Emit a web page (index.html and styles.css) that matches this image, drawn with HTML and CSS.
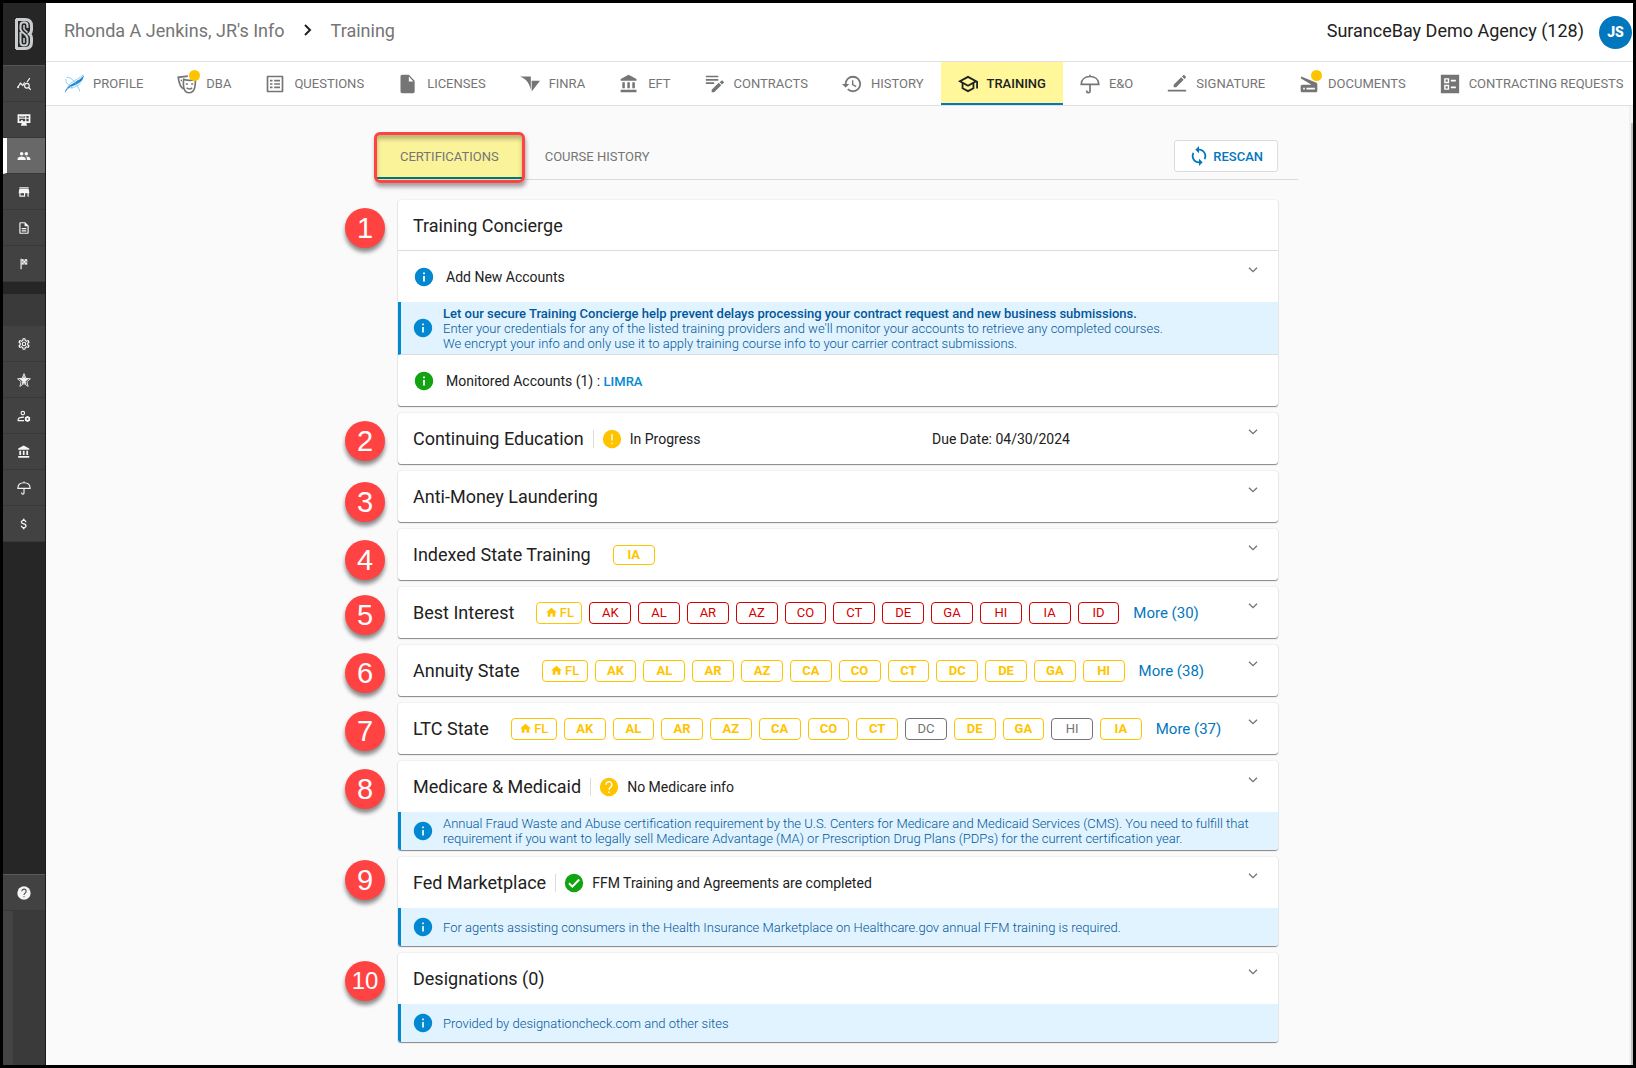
FILE: index.html
```html
<!DOCTYPE html>
<html lang="en">
<head>
  <meta charset="UTF-8" />
  <meta name="viewport" content="width=device-width, initial-scale=1.0" />
  <title>Training - SuranceBay</title>
  <link rel="stylesheet" href="styles.css">
</head>
<body>
  <!-- icon set -->
  <svg class="sprite" aria-hidden="true">
    <symbol id="i-bank" viewBox="0 0 24 24"><path d="M4 10v7h3v-7H4zm6 0v7h3v-7h-3zM2 22h19v-3H2v3zm14-12v7h3v-7h-3zm-4.500-9L2 6v2h19V6l-9.500-5z"/></symbol>
    <symbol id="i-umbrella" viewBox="0 0 24 24"><path d="M1.500 12.500C1.500 6.500 6 3 12 3s10.500 3.500 10.500 9.500z M12 1v2 M12 12.500v8a2 2 0 0 1-4 0v-.6" fill="none" stroke="currentColor" stroke-width="2"/></symbol>
    <symbol id="i-info" viewBox="0 0 24 24"><path d="M12 2C6.480 2 2 6.480 2 12s4.480 10 10 10 10-4.480 10-10S17.520 2 12 2zm1 15h-2v-6h2v6zm0-8h-2V7h2v2z"/></symbol>
    <symbol id="i-warn" viewBox="0 0 24 24"><circle cx="12" cy="12" r="10"/><path d="M12 6.500v7M12 16v1.500" stroke="#fff" stroke-width="1.500"/></symbol>
    <symbol id="i-help" viewBox="0 0 24 24"><circle cx="12" cy="12" r="10"/><path d="M8.800 9.500a3.200 3.200 0 1 1 5.200 2.400c-1.200.9-2 1.500-2 3.100M12 16.800v1.700" fill="none" stroke="var(--mark, #fff)" stroke-width="1.600"/></symbol>
    <symbol id="i-check" viewBox="0 0 24 24"><circle cx="12" cy="12" r="10"/><path d="M6.500 12.300l3.700 3.700 7.500-7.800" fill="none" stroke="#fff" stroke-width="2.200"/></symbol>
    <symbol id="i-down" viewBox="0 0 24 24"><path d="M6 8.500l6 6 6-6" fill="none" stroke="currentColor" stroke-width="2"/></symbol>
    <symbol id="i-home" viewBox="0 0 24 24"><path d="M10 20v-6h4v6h5v-8h3L12 3 2 12h3v8z"/></symbol>
  </svg>

  <aside class="sidebar">
    <a class="logo" href="#" aria-label="SuranceBay">
      <svg class="line" viewBox="0 0 20 34" width="20" height="34">
        <path d="M2.500 2v30M2 2.500h9c4.500 0 6.500 2.500 6.500 6.500v4c0 2-.7 3-2 4 1.300 1 2 2 2 4v4c0 4-2 6.500-6.500 6.500H2" stroke="#c9ccce" stroke-width="3"/>
        <path d="M13.500 11V8.500c0-2-1.500-3.200-3.500-3.200s-3.500 1.200-3.500 3.200V12c0 2 1.400 3 3.500 4.500s3.500 2.700 3.500 5V25c0 2.200-1.500 3.500-3.500 3.500S6.500 27 6.500 25V15" stroke="#c9ccce" stroke-width="2"/>
        <path d="M10 8v4l3.500 3.500M10 26v-5" stroke="#c9ccce" stroke-width="1.500"/>
      </svg>
    </a>
    <nav class="side-group" aria-label="Main">
      <a href="#" aria-label="Analytics"><svg viewBox="0 0 24 24"><path d="M1 18l5-7 4 3.500L13 9M17 9l5-7" fill="none" stroke="currentColor" stroke-width="2"/><circle cx="2" cy="17.500" r="1.600"/><circle cx="6" cy="11" r="1.600"/><circle cx="17" cy="15" r="4" fill="none" stroke="currentColor" stroke-width="2"/><path d="M20 18l3.500 4" stroke="currentColor" stroke-width="2"/></svg></a>
      <a href="#" aria-label="Dashboard"><svg viewBox="0 0 24 24"><path fill-rule="evenodd" d="M1 2h22v15h-7l1 4v1H7v-1l1-4H1zM4 5v3h10V5zm12 0v3h4V5zM4 10v4h3v-2h3v2h4v-4zm12 0v4h4v-4z"/><path d="M5 5.500h8v2H5z" opacity=".7"/></svg></a>
      <a class="current" href="#" aria-label="Producers"><svg viewBox="0 0 24 24"><path d="M16 11c1.660 0 2.990-1.340 2.990-3S17.660 5 16 5c-1.660 0-3 1.340-3 3s1.340 3 3 3zm-8 0c1.660 0 2.990-1.340 2.990-3S9.660 5 8 5C6.340 5 5 6.340 5 8s1.340 3 3 3zm0 2c-2.330 0-7 1.170-7 3.500V19h14v-2.500c0-2.330-4.670-3.500-7-3.500zm8 0c-.29 0-.62.02-.97.05 1.160.84 1.970 1.970 1.970 3.450V19h6v-2.500c0-2.330-4.670-3.500-7-3.500z"/></svg></a>
      <a href="#" aria-label="Store"><svg viewBox="0 0 24 24"><path d="M20 4H4v2h16V4zm1 10v-2l-1-5H4l-1 5v2h1v6h10v-6h4v6h2v-6h1zm-9 4H6v-4h6v4z"/></svg></a>
      <a href="#" aria-label="Documents"><svg viewBox="0 0 24 24"><path d="M8 16h8v2H8zm0-4h8v2H8zm6-10H6c-1.100 0-2 .9-2 2v16c0 1.100.89 2 1.990 2H18c1.100 0 2-.9 2-2V8l-6-6zm4 18H6V4h7v5h5v11z"/></svg></a>
      <a href="#" aria-label="Goals"><svg viewBox="0 0 24 24"><path d="M6 3h2v18H6z"/><path d="M8 4h3v3H8zM14 4h3v3h-3zM11 7h3v3h-3zM8 10h3v3H8zM14 10h3v3h-3z"/><path d="M8 4h10v9H8z" opacity=".5"/></svg></a>
    </nav>
    <div class="side-blank"></div>
    <nav class="side-group" aria-label="Agency">
      <a href="#" aria-label="Settings"><svg viewBox="0 0 24 24"><path d="M12,8A4,4 0 0,1 16,12A4,4 0 0,1 12,16A4,4 0 0,1 8,12A4,4 0 0,1 12,8M12,10A2,2 0 0,0 10,12A2,2 0 0,0 12,14A2,2 0 0,0 14,12A2,2 0 0,0 12,10M10,22C9.750,22 9.540,21.820 9.500,21.580L9.130,18.930C8.500,18.680 7.960,18.340 7.440,17.940L4.950,18.950C4.730,19.030 4.460,18.950 4.340,18.730L2.340,15.270C2.210,15.050 2.270,14.780 2.460,14.630L4.570,12.970L4.500,12L4.570,11L2.460,9.370C2.270,9.220 2.210,8.950 2.340,8.730L4.340,5.270C4.460,5.050 4.730,4.960 4.950,5.050L7.440,6.050C7.960,5.660 8.500,5.320 9.130,5.070L9.500,2.420C9.540,2.180 9.750,2 10,2H14C14.250,2 14.460,2.180 14.500,2.420L14.870,5.070C15.500,5.320 16.040,5.660 16.560,6.050L19.050,5.050C19.270,4.960 19.540,5.050 19.660,5.270L21.660,8.730C21.790,8.950 21.730,9.220 21.540,9.370L19.430,11L19.500,12L19.430,13L21.540,14.630C21.730,14.780 21.790,15.050 21.660,15.270L19.660,18.730C19.540,18.950 19.270,19.040 19.050,18.950L16.560,17.950C16.040,18.340 15.500,18.680 14.870,18.930L14.500,21.580C14.460,21.820 14.250,22 14,22H10M11.250,4L10.880,6.610C9.680,6.860 8.620,7.500 7.850,8.390L5.440,7.350L4.690,8.650L6.800,10.200C6.400,11.370 6.400,12.640 6.800,13.800L4.680,15.360L5.430,16.660L7.860,15.620C8.630,16.500 9.680,17.140 10.870,17.380L11.240,20H12.760L13.130,17.390C14.320,17.140 15.370,16.500 16.140,15.620L18.570,16.660L19.320,15.360L17.200,13.810C17.600,12.640 17.600,11.370 17.200,10.200L19.310,8.650L18.560,7.350L16.150,8.390C15.380,7.500 14.320,6.860 13.120,6.620L12.750,4H11.250Z"/></svg></a>
      <a href="#" aria-label="Carriers"><svg viewBox="0 0 24 24"><path d="M12 2l4 18-13-11h18L8 20z"/><path d="M12 1l3 8 8 1-6 5 2 8-7-5-7 5 2-8-6-5 8-1z" fill="none" stroke="currentColor" stroke-width="1.500"/></svg></a>
      <a href="#" aria-label="User settings"><svg viewBox="0 0 24 24"><circle cx="10" cy="7" r="3" fill="none" stroke="currentColor" stroke-width="2"/><path d="M12 14c-5 0-10 .5-10 4v2h10" fill="none" stroke="currentColor" stroke-width="2"/><circle cx="18" cy="17" r="3" fill="none" stroke="currentColor" stroke-width="3"/><path d="M18 12v2M18 20v2M13.700 14.500l1.700 1M20.600 18.500l1.700 1M22.300 14.500l-1.700 1M15.400 18.500l-1.700 1" stroke="currentColor" stroke-width="2"/></svg></a>
      <a href="#" aria-label="Bank"><svg><use href="#i-bank"/></svg></a>
      <a href="#" aria-label="Insurance"><svg><use href="#i-umbrella"/></svg></a>
      <a href="#" aria-label="Commissions"><svg viewBox="0 0 24 24"><path d="M11.800 10.900c-2.270-.59-3-1.200-3-2.150 0-1.090 1.010-1.850 2.700-1.850 1.780 0 2.440.85 2.500 2.100h2.210c-.07-1.720-1.120-3.300-3.210-3.810V3h-3v2.160c-1.940.42-3.500 1.680-3.500 3.610 0 2.310 1.910 3.460 4.700 4.130 2.500.6 3 1.480 3 2.410 0 .69-.49 1.790-2.700 1.790-2.060 0-2.870-.92-2.980-2.100h-2.200c.12 2.190 1.760 3.420 3.680 3.830V21h3v-2.150c1.950-.37 3.500-1.500 3.500-3.550 0-2.840-2.430-3.810-4.700-4.400z"/></svg></a>
    </nav>
    <nav class="side-help" aria-label="Help">
      <a href="#" aria-label="Help"><svg><use href="#i-help"/></svg></a>
    </nav>
    <div class="side-foot"></div>
  </aside>

  <div class="page">
    <header class="topbar">
      <div class="crumbs">
        <a href="#">Rhonda A Jenkins, JR's Info</a>
        <svg class="line" viewBox="0 0 8 12" width="8" height="12"><path d="M1 1l5 5-5 5" stroke="#212121" stroke-width="2"/></svg>
        <span>Training</span>
      </div>
      <div class="agency">SuranceBay Demo Agency (128)</div>
      <button class="avatar" type="button">JS</button>
    </header>

    <nav class="tabs">
      <a href="#"><svg viewBox="0 0 24 24"><path d="M1 23C2 15 9 13 13 10c4-3 8-4 11-9-1 7-4 9-8 11-5 3-11 3-15 11z" fill="#1e88d2"/><path d="M4 18C5 11 12 9 16 6c3-2 5-3 7-5M8 17c5-1 9-3 12-6" fill="none" stroke="#7cc4f0" stroke-width="1"/><path d="M3 4c7 0 13 8 16 17M2 6c0 5 4 8 8 11" fill="none" stroke="#7cc4f0" stroke-width="1"/></svg>PROFILE</a>
      <a href="#"><span class="dotted"><svg class="line" viewBox="0 0 24 24" stroke="currentColor" stroke-width="2"><path d="M8 18C4 16 2.500 12 1.500 4L13 2.500M4.500 8l1.500-.3"/><path d="M8 6.500c5 1.500 10 1.500 14 0 .5 7-.5 16-7.500 16S7 13 8 6.500z"/><path d="M10.500 12h2.500M17 12h2.500M11.500 16.500c2 2 5 2 6.500 0"/></svg></span>DBA</a>
      <a href="#"><svg viewBox="0 0 24 24"><path d="M20 4v16H4V4h16m1.100-2H2.900c-.5 0-.9.4-.9.9v18.200c0 .4.4.9.9.9h18.200c.4 0 .9-.5.9-.9V2.900c0-.5-.5-.9-.9-.9zM11 7h7v2h-7V7zm0 4h7v2h-7v-2zm0 4h7v2h-7zM6 7h3v2H6zm0 4h3v2H6zm0 4h3v2H6z"/></svg>QUESTIONS</a>
      <a href="#"><svg viewBox="0 0 24 24"><path d="M5 1c-1.100 0-2 .9-2 2v18c0 1.100.9 2 2 2h13c1.100 0 2-.9 2-2V8l-7-7H5zm8 8V3l5.500 6H13z"/></svg>LICENSES</a>
      <a href="#"><svg viewBox="0 0 24 24"><path d="M0 3h13v16C11 10 7 6 0 3zM14 8h10L14 21z"/></svg>FINRA</a>
      <a href="#"><svg><use href="#i-bank"/></svg>EFT</a>
      <a href="#"><svg viewBox="0 0 24 24"><path d="M1 2h15v2H1zM1 6h15v2H1zM1 10h10v2H1zM8 22v-3l8.500-8.500 3 3L11 22zM20.500 7.500l2.500 2.500-2.500 2.500-3-2.500z"/></svg>CONTRACTS</a>
      <a href="#"><svg viewBox="1 1 22 22"><path d="M13 3a9 9 0 0 0-9 9H1l3.890 3.890.07.14L9 12H6c0-3.870 3.130-7 7-7s7 3.130 7 7-3.130 7-7 7c-1.930 0-3.680-.79-4.940-2.060l-1.420 1.420A8.954 8.954 0 0 0 13 21a9 9 0 0 0 0-18zm-1 5v5l4.280 2.540.72-1.210-3.500-2.080V8H12z"/></svg>HISTORY</a>
      <a class="current" href="#"><svg viewBox="1 1 22 22"><path d="M12 3L1 9l4 2.180v6L12 21l7-3.820v-6l2-1.090V17h2V9L12 3zm6.820 6L12 12.720 5.180 9 12 5.280 18.820 9zM17 15.990l-5 2.730-5-2.730v-3.720L12 15l5-2.730v3.720z"/></svg>TRAINING</a>
      <a href="#"><svg><use href="#i-umbrella"/></svg>E&amp;O</a>
      <a href="#"><svg viewBox="0 0 24 24"><path d="M1 19h22v2H1zM8 16v-3l9-9 3 3-9 9zM18 3l1.500-1.500c.4-.4 1-.4 1.400 0l1.600 1.600c.4.4.4 1 0 1.400L21 6z"/></svg>SIGNATURE</a>
      <a href="#"><span class="dotted"><svg viewBox="0 0 24 24"><path fill-rule="evenodd" d="M2 5l.7-2L21 10.500c.8.500 1 1.500 1 2.500v7c0 1-1 2-2 2H4c-1 0-2-1-2-2v-5c0-1 1-2 2-2h11zM5 16.500v2h2v-2zm4 0v2h10v-2z"/></svg></span>DOCUMENTS</a>
      <a href="#"><svg viewBox="0 0 24 24"><path fill-rule="evenodd" d="M1 1h22v22H1zM5 5v6h6V5zm1.700 1.700h2.600v2.600H6.700zM13 7v2h6V7zM5 13v6h6v-6zm1.700 1.700h2.600v2.600H6.700zM13 15v2h6v-2z"/></svg>CONTRACTING REQUESTS</a>
    </nav>

    <div class="scroller">
      <main class="content">
        <div class="subtabs">
          <a class="current" href="#">CERTIFICATIONS</a>
          <a href="#">COURSE HISTORY</a>
          <button class="rescan" type="button"><svg viewBox="2 1 20 22"><path d="M12 4V1L8 5l4 4V6c3.310 0 6 2.690 6 6 0 1.010-.25 1.970-.7 2.800l1.460 1.460C19.540 15.030 20 13.570 20 12c0-4.420-3.580-8-8-8zm0 14c-3.310 0-6-2.690-6-6 0-1.010.25-1.970.7-2.800L5.240 7.740C4.460 8.970 4 10.430 4 12c0 4.420 3.580 8 8 8v3l4-4-4-4v3z"/></svg>RESCAN</button>
        </div>

        <div class="cards">
          <section class="card">
            <span class="step">1</span>
            <div class="head ruled"><h2>Training Concierge</h2></div>
            <div class="row">
              <svg class="mark blue"><use href="#i-info"/></svg>
              <span class="label">Add New Accounts</span>
              <button class="toggle" type="button" aria-label="Expand"><svg><use href="#i-down"/></svg></button>
            </div>
            <div class="note tall">
              <svg class="mark blue"><use href="#i-info"/></svg>
              <p><strong>Let our secure Training Concierge help prevent delays processing your contract request and new business submissions.</strong><br>
              Enter your credentials for any of the listed training providers and we'll monitor your accounts to retrieve any completed courses.<br>
              We encrypt your info and only use it to apply training course info to your carrier contract submissions.</p>
            </div>
            <div class="row">
              <svg class="mark green"><use href="#i-info"/></svg>
              <span class="label">Monitored Accounts (1) : <a href="#">LIMRA</a></span>
            </div>
          </section>

          <section class="card">
            <span class="step">2</span>
            <div class="head">
              <div class="lead">
                <h2>Continuing Education</h2>
                <div class="status"><svg class="mark yellow"><use href="#i-warn"/></svg>In Progress</div>
              </div>
              <span>Due Date: 04/30/2024</span>
              <button class="toggle" type="button" aria-label="Expand"><svg><use href="#i-down"/></svg></button>
            </div>
          </section>

          <section class="card">
            <span class="step low">3</span>
            <div class="head">
              <h2>Anti-Money Laundering</h2>
              <button class="toggle" type="button" aria-label="Expand"><svg><use href="#i-down"/></svg></button>
            </div>
          </section>

          <section class="card">
            <span class="step low">4</span>
            <div class="head">
              <h2>Indexed State Training</h2>
              <div class="chips one"><span>IA</span></div>
              <button class="toggle" type="button" aria-label="Expand"><svg><use href="#i-down"/></svg></button>
            </div>
          </section>

          <section class="card">
            <span class="step">5</span>
            <div class="head">
              <h2>Best Interest</h2>
              <div class="chips">
                <span class="home"><svg><use href="#i-home"/></svg>FL</span>
                <span class="red">AK</span><span class="red">AL</span><span class="red">AR</span><span class="red">AZ</span><span class="red">CO</span><span class="red">CT</span><span class="red">DE</span><span class="red">GA</span><span class="red">HI</span><span class="red">IA</span><span class="red">ID</span>
              </div>
              <a class="more" href="#">More (30)</a>
              <button class="toggle" type="button" aria-label="Expand"><svg><use href="#i-down"/></svg></button>
            </div>
          </section>

          <section class="card">
            <span class="step">6</span>
            <div class="head">
              <h2>Annuity State</h2>
              <div class="chips">
                <span class="home"><svg><use href="#i-home"/></svg>FL</span>
                <span>AK</span><span>AL</span><span>AR</span><span>AZ</span><span>CA</span><span>CO</span><span>CT</span><span>DC</span><span>DE</span><span>GA</span><span>HI</span>
              </div>
              <a class="more" href="#">More (38)</a>
              <button class="toggle" type="button" aria-label="Expand"><svg><use href="#i-down"/></svg></button>
            </div>
          </section>

          <section class="card">
            <span class="step">7</span>
            <div class="head">
              <h2>LTC State</h2>
              <div class="chips wide">
                <span class="home"><svg><use href="#i-home"/></svg>FL</span>
                <span>AK</span><span>AL</span><span>AR</span><span>AZ</span><span>CA</span><span>CO</span><span>CT</span><span class="gray">DC</span><span>DE</span><span>GA</span><span class="gray">HI</span><span>IA</span>
              </div>
              <a class="more" href="#">More (37)</a>
              <button class="toggle" type="button" aria-label="Expand"><svg><use href="#i-down"/></svg></button>
            </div>
          </section>

          <section class="card">
            <span class="step">8</span>
            <div class="head">
              <h2>Medicare &amp; Medicaid</h2>
              <div class="status"><svg class="mark yellow"><use href="#i-help"/></svg>No Medicare info</div>
              <button class="toggle" type="button" aria-label="Expand"><svg><use href="#i-down"/></svg></button>
            </div>
            <div class="note">
              <svg class="mark blue"><use href="#i-info"/></svg>
              <p>Annual Fraud Waste and Abuse certification requirement by the U.S. Centers for Medicare and Medicaid Services (CMS). You need to fulfill that<br>
              requirement if you want to legally sell Medicare Advantage (MA) or Prescription Drug Plans (PDPs) for the current certification year.</p>
            </div>
          </section>

          <section class="card">
            <span class="step high">9</span>
            <div class="head">
              <h2>Fed Marketplace</h2>
              <div class="status"><svg class="mark green"><use href="#i-check"/></svg>FFM Training and Agreements are completed</div>
              <button class="toggle" type="button" aria-label="Expand"><svg><use href="#i-down"/></svg></button>
            </div>
            <div class="note">
              <svg class="mark blue"><use href="#i-info"/></svg>
              <p>For agents assisting consumers in the Health Insurance Marketplace on Healthcare.gov annual FFM training is required.</p>
            </div>
          </section>

          <section class="card">
            <span class="step ten">10</span>
            <div class="head">
              <h2>Designations (0)</h2>
              <button class="toggle" type="button" aria-label="Expand"><svg><use href="#i-down"/></svg></button>
            </div>
            <div class="note">
              <svg class="mark blue"><use href="#i-info"/></svg>
              <p>Provided by designationcheck.com and other sites</p>
            </div>
          </section>
        </div>
      </main>
      <div class="scrollbar"><div class="thumb"></div></div>
    </div>
  </div>
</body>
</html>
```
FILE: styles.css
```css
* {
  box-sizing: border-box;
}
body {
  margin: 0;
  min-height: 100vh;
  display: flex;
  border: 3px solid #000;
  background: #fafafa;
  font-family: Roboto, sans-serif;
  font-size: 14px;
  color: #212121;
}
a {
  color: inherit;
  text-decoration: none;
}
button {
  font: inherit;
  cursor: pointer;
}
svg {
  fill: currentColor;
  flex: none;
}
svg.line {
  fill: none;
}
.sprite {
  position: absolute;
  width: 0;
  height: 0;
}

/* sidebar */
.sidebar {
  flex: none;
  width: 43px;
  display: flex;
  flex-direction: column;
  background: #262626;
  border-right: 1px solid #1c1c1c;
  color: #f5f5f5;
}
.logo {
  height: 63px;
  display: flex;
  align-items: center;
  justify-content: center;
  border-bottom: 1px solid #555;
}
.side-group a,
.side-help a {
  height: 36px;
  display: flex;
  align-items: center;
  justify-content: center;
  background: #424242;
  border-bottom: 1px solid #383838;
}
.side-group svg,
.side-help svg {
  width: 14px;
  height: 14px;
}
.side-group .current {
  background: #686868;
  border-left: 4px solid #fff;
  padding-right: 4px;
}
.side-blank {
  height: 32px;
  margin-top: 12px;
  background: #3a3a3a;
}
.side-help {
  margin-top: auto;
  border-top: 1px solid #5a5a5a;
}
.side-help svg {
  --mark: #424242;
  width: 16px;
  height: 16px;
}
.side-foot {
  height: 154px;
  background: #3a3a3a;
  border-left: 10px solid #444;
}

/* header */
.page {
  flex: 1;
  min-width: 0;
  display: flex;
  flex-direction: column;
}
.topbar {
  height: 59px;
  display: flex;
  align-items: center;
  padding: 0 0 4px 18px;
  background: #fff;
  border-bottom: 1px solid #e0e0e0;
  font-size: 18px;
}
.crumbs {
  flex: 1;
  display: flex;
  align-items: center;
  gap: 19px;
  color: #757575;
}
.avatar {
  width: 33px;
  height: 33px;
  margin: 4px 1px 0 15px;
  padding: 0;
  border: 0;
  border-radius: 50%;
  background: #0277bd;
  color: #fff;
  font-size: 14px;
  font-weight: 900;
}
.tabs {
  height: 44px;
  display: flex;
  overflow: hidden;
  padding-left: 1px;
  background: #fff;
  border-bottom: 1px solid #e0e0e0;
}
.tabs a {
  flex: none;
  display: flex;
  align-items: center;
  gap: 9px;
  padding: 2px 17px 0;
  border-bottom: 2px solid transparent;
  color: #757575;
  font-size: 13px;
}
.tabs svg {
  display: block;
  width: 20px;
  height: 20px;
}
.tabs .current {
  background: #fff799;
  border-bottom-color: #0277bd;
  color: #212121;
  font-weight: 500;
}
.dotted {
  position: relative;
}
.dotted::after {
  content: "";
  position: absolute;
  top: -4px;
  right: -3px;
  width: 11px;
  height: 11px;
  border-radius: 50%;
  background: #ffc400;
}

/* content */
.scroller {
  flex: 1;
  display: flex;
}
.scrollbar {
  width: 4px;
  padding: 17px 0 0 2px;
  background: #f1f1f1;
}
.thumb {
  height: 100%;
  background: #c1c1c1;
}
.content {
  flex: 1;
  min-width: 0;
  max-width: 921px;
  margin: 29px auto 23px;
}
.subtabs {
  height: 45px;
  display: flex;
  align-items: center;
  border-bottom: 1px solid #dcdcdc;
  padding-right: 20px;
}
.subtabs a {
  height: 44px;
  display: flex;
  align-items: center;
  padding: 0 23px;
  border-bottom: 2px solid transparent;
  color: #757575;
  font-size: 13px;
}
.subtabs .current {
  position: relative;
  background: #faf39a;
  border-bottom-color: #00796b;
  box-shadow: inset 0 4px 4px rgba(0, 0, 0, 0.25);
}
.subtabs .current::before {
  content: "";
  position: absolute;
  inset: -3px -3px -6px;
  border: 3px solid #ff4343;
  border-radius: 6px;
  box-shadow: 1px 4px 4px rgba(0, 0, 0, 0.35);
}
.rescan {
  height: 32px;
  margin: 0 0 2px auto;
  display: flex;
  align-items: center;
  gap: 4px;
  padding: 0 14px;
  background: #fff;
  border: 1px solid #dcdcdc;
  border-radius: 3px;
  color: #0277bd;
  font-size: 13px;
  font-weight: 500;
}
.rescan svg {
  width: 20px;
  height: 20px;
}
.cards {
  display: flex;
  flex-direction: column;
  gap: 7px;
  padding: 20px 20px 0 21px;
}
.card {
  position: relative;
  background: #fff;
  border-radius: 3px;
  box-shadow: 0 1px 1px rgba(0, 0, 0, 0.45), 0 0 2px rgba(0, 0, 0, 0.12);
}
.head,
.row {
  min-height: 51px;
  display: flex;
  align-items: center;
  padding: 0 17px 0 15px;
}
.ruled {
  border-bottom: 1px solid #dcdcdc;
}
.row {
  gap: 11px;
}
h2 {
  margin: 0;
  font-size: 18px;
  font-weight: 400;
}
.label,
.status,
.lead + span {
  font-size: 14px;
}
.label a {
  color: #0288d1;
  font-size: 13px;
  font-weight: 500;
}
.lead {
  flex: 0 0 519px;
  display: flex;
  align-items: center;
}
.status {
  display: flex;
  align-items: center;
  gap: 7px;
  margin-left: 9px;
}
.status::before {
  content: "";
  width: 1px;
  height: 18px;
  background: #dcdcdc;
}
.mark {
  width: 22px;
  height: 22px;
}
.blue {
  color: #0288d1;
}
.green {
  color: #12a312;
}
.yellow {
  color: #ffc400;
}
.toggle {
  align-self: flex-start;
  width: 16px;
  height: 16px;
  margin: 11px 0 0 auto;
  padding: 0;
  border: 0;
  background: none;
  color: #757575;
}
.toggle svg {
  display: block;
  width: 16px;
  height: 16px;
}
.note {
  min-height: 38px;
  display: flex;
  align-items: center;
  gap: 9px;
  padding: 1px 12px 1px 11px;
  background: #e1f3fe;
  border-left: 3px solid #0288d1;
  border-radius: 0 0 3px 3px;
  color: #01579b;
  font-size: 13px;
  font-weight: 300;
  line-height: 15px;
}
.note p {
  margin: 0;
}
.note.tall {
  min-height: 53px;
  border-bottom: 1px solid #dcdcdc;
  border-radius: 0;
}
.note strong {
  font-weight: 500;
}

/* state chips */
.chips {
  width: 583px;
  margin-left: 22px;
  display: grid;
  grid-auto-flow: column;
  grid-template-columns: 46px;
  grid-auto-columns: 1fr;
  gap: 7px;
}
.chips.wide {
  width: 631px;
}
.chips.one {
  width: 42px;
  grid-template-columns: 42px;
}
.chips span {
  height: 22px;
  display: flex;
  align-items: center;
  justify-content: center;
  border: 1px solid currentColor;
  border-radius: 4px;
  color: #ffc400;
  font-size: 13px;
  font-weight: 700;
}
.chips.one span {
  height: 20px;
}
.chips .home {
  gap: 2px;
  font-weight: 500;
}
.chips svg {
  width: 13px;
  height: 13px;
}
.chips .red {
  color: #d50000;
  font-weight: 400;
}
.chips .gray {
  color: #757575;
  font-weight: 400;
}
.more {
  margin-left: 14px;
  color: #0277bd;
  font-size: 15px;
}

/* numbered callouts beside the cards */
.step {
  position: absolute;
  top: 8px;
  left: -53px;
  width: 40px;
  height: 40px;
  border-radius: 50%;
  background: #ff4343;
  box-shadow: 0 4px 4px rgba(0, 0, 0, 0.45);
  color: #fff;
  font-family: "Liberation Sans", sans-serif;
  font-size: 29px;
  line-height: 40px;
  text-align: center;
}
.step.low {
  top: 11px;
}
.step.high {
  top: 3px;
}
.step.ten {
  font-size: 24px;
}
```
